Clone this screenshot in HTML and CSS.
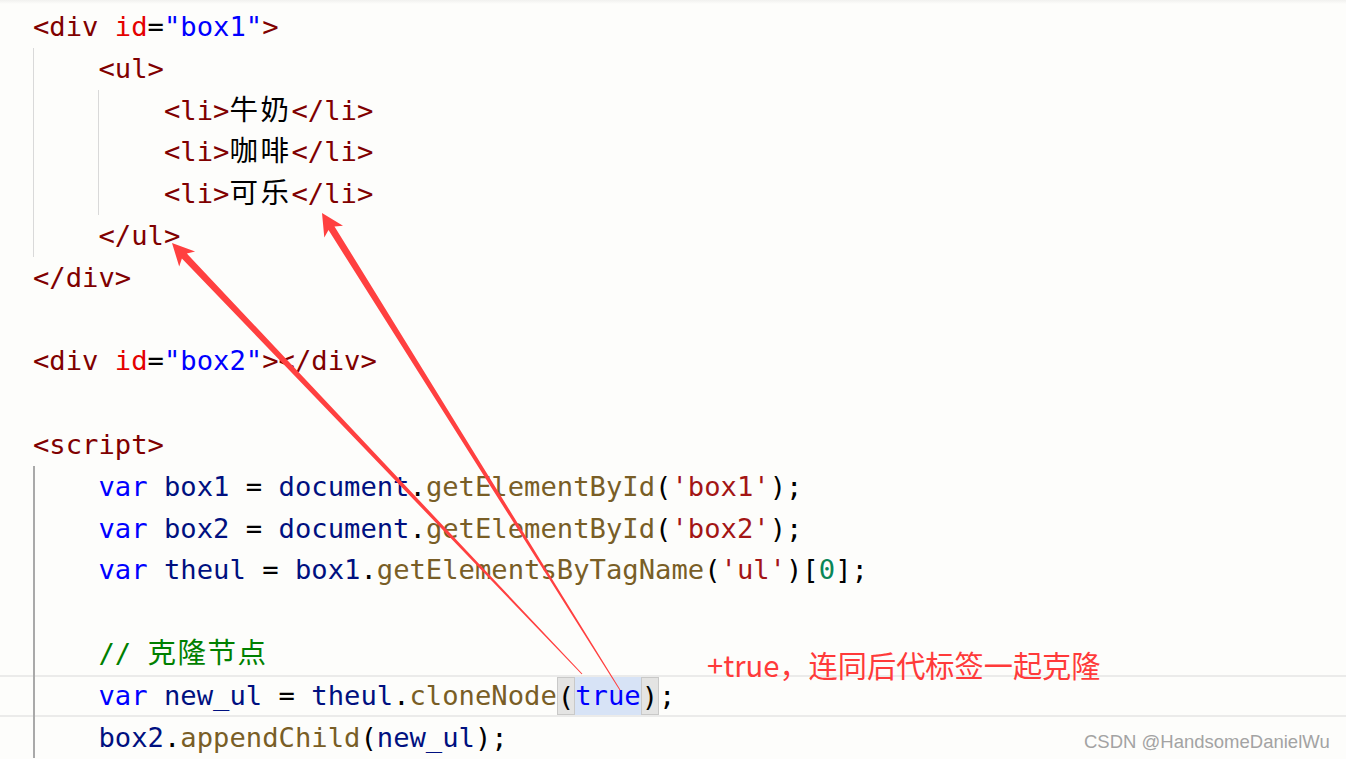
FILE: index.html
```html
<!DOCTYPE html>
<html lang="zh">
<head>
<meta charset="utf-8">
<title>cloneNode</title>
<link rel="stylesheet" href="styles.css">
</head>
<body>
<div class="editor">
  <div class="code">
    <div class="line"><span class="src"><span class="tg">&lt;div</span> <span class="at">id</span>=<span class="av">"box1"</span><span class="tg">&gt;</span></span></div>
    <div class="line"><span class="ind g"></span><span class="src"><span class="tg">&lt;ul&gt;</span></span></div>
    <div class="line"><span class="ind g"></span><span class="ind g"></span><span class="src"><span class="tg">&lt;li&gt;</span><span class="cjk">牛奶</span><span class="tg">&lt;/li&gt;</span></span></div>
    <div class="line"><span class="ind g"></span><span class="ind g"></span><span class="src"><span class="tg">&lt;li&gt;</span><span class="cjk">咖啡</span><span class="tg">&lt;/li&gt;</span></span></div>
    <div class="line"><span class="ind g"></span><span class="ind g"></span><span class="src"><span class="tg">&lt;li&gt;</span><span class="cjk">可乐</span><span class="tg">&lt;/li&gt;</span></span></div>
    <div class="line"><span class="ind g"></span><span class="src"><span class="tg">&lt;/ul&gt;</span></span></div>
    <div class="line"><span class="src"><span class="tg">&lt;/div&gt;</span></span></div>
    <div class="line"></div>
    <div class="line"><span class="src"><span class="tg">&lt;div</span> <span class="at">id</span>=<span class="av">"box2"</span><span class="tg">&gt;&lt;/div&gt;</span></span></div>
    <div class="line"></div>
    <div class="line"><span class="src"><span class="tg">&lt;script&gt;</span></span></div>
    <div class="line"><span class="ind a"></span><span class="src"><span class="kw">var</span> <span class="vr">box1</span> = <span class="vr">document</span>.<span class="fn">getElementById</span>(<span class="st">'box1'</span>);</span></div>
    <div class="line"><span class="ind a"></span><span class="src"><span class="kw">var</span> <span class="vr">box2</span> = <span class="vr">document</span>.<span class="fn">getElementById</span>(<span class="st">'box2'</span>);</span></div>
    <div class="line"><span class="ind a"></span><span class="src"><span class="kw">var</span> <span class="vr">theul</span> = <span class="vr">box1</span>.<span class="fn">getElementsByTagName</span>(<span class="st">'ul'</span>)[<span class="nm">0</span>];</span></div>
    <div class="line"><span class="ind a"></span></div>
    <div class="line"><span class="ind a"></span><span class="src"><span class="cm">// <span class="cjk cjk-cm">克隆节点</span></span></span></div>
    <div class="line cur"><span class="ind a"></span><span class="src"><span class="kw">var</span> <span class="vr">new_ul</span> = <span class="vr">theul</span>.<span class="fn">cloneNode</span><span class="br">(</span><span class="sel kw">true</span><span class="br">)</span>;</span></div>
    <div class="line"><span class="ind a"></span><span class="src"><span class="vr">box2</span>.<span class="fn">appendChild</span>(<span class="vr">new_ul</span>);</span></div>
  </div>
</div>

<svg class="arrows" width="1346" height="759" viewBox="0 0 1346 759" aria-hidden="true">
  <polygon points="582.4,673.7 186.9,253.6 195.1,251.4 172,243 179.2,266.5 181.9,258.5 581.6,674.3"/>
  <polygon points="620.4,689.7 334.5,226.4 343.0,225.8 322,213 324.3,237.5 328.5,230.1 619.6,690.3"/>
</svg>

<div class="note">+true，连同后代标签一起克隆</div>
<div class="mark">CSDN @HandsomeDanielWu</div>
</body>
</html>
```

FILE: styles.css
```css
html, body {
  margin: 0;
  padding: 0;
}

body {
  width: 1346px;
  height: 759px;
  overflow: hidden;
  background: #fdfdfb;
  position: relative;
}

.editor {
  height: 759px;
  background: linear-gradient(#f1f1ef, rgba(253, 253, 251, 0)) 0 0 / 100% 4px no-repeat;
}

.code {
  padding-top: 6px;
  font-family: "DejaVu Sans Mono", "Noto Sans CJK SC", monospace;
  font-size: 27.2px;
  color: #000;
}

.line {
  display: flex;
  box-sizing: border-box;
  height: 41.8px;
  line-height: 41.8px;
  padding-left: 33px;
  white-space: pre;
}

.line.cur {
  border-top: 2px solid #ebebea;
  border-bottom: 2px solid #ebebea;
  line-height: 37.8px;
}

.ind {
  flex: none;
  width: 4ch;
}

.ind.g {
  background: linear-gradient(#d9d9d9, #d9d9d9) 0 0 / 1px 100% no-repeat;
}

.ind.a {
  background: linear-gradient(#a9a9a9, #a9a9a9) 0 0 / 2px 100% no-repeat;
}

.cur .ind.a {
  margin-top: -2px;
  margin-bottom: -2px;
}

.src {
  white-space: pre;
}

.cjk {
  font-family: "Noto Sans CJK SC", sans-serif;
  font-size: 28.5px;
  line-height: 20px;
  letter-spacing: 2.5px;
  color: #000;
}

.cjk-cm {
  letter-spacing: 1.5px;
  color: #008000;
}

.tg { color: #800000; }
.at { color: #e50000; }
.av { color: #0000ff; }
.kw { color: #0000ff; }
.vr { color: #001080; }
.fn { color: #795e26; }
.st { color: #a31515; }
.nm { color: #098658; }
.cm { color: #008000; }

.br,
.sel {
  display: inline-block;
  vertical-align: top;
  box-sizing: border-box;
  height: 37.8px;
}

.br {
  background: #e4e4e3;
  border: 1px solid #c9c9c8;
  color: #000;
}

.sel {
  background: #d7e3f6;
}

.arrows {
  position: absolute;
  top: 0;
  left: 0;
  pointer-events: none;
}

.arrows polygon {
  fill: #ff4040;
}

.note {
  position: absolute;
  left: 707px;
  top: 647px;
  font-family: "Noto Sans CJK SC", sans-serif;
  font-size: 29.2px;
  line-height: 34px;
  color: #ff3a3a;
  white-space: nowrap;
}

.mark {
  position: absolute;
  left: 1084px;
  top: 731px;
  font-family: "Liberation Sans", Arial, sans-serif;
  font-size: 18.5px;
  line-height: 22px;
  color: #a3a3a3;
  white-space: nowrap;
}
```
